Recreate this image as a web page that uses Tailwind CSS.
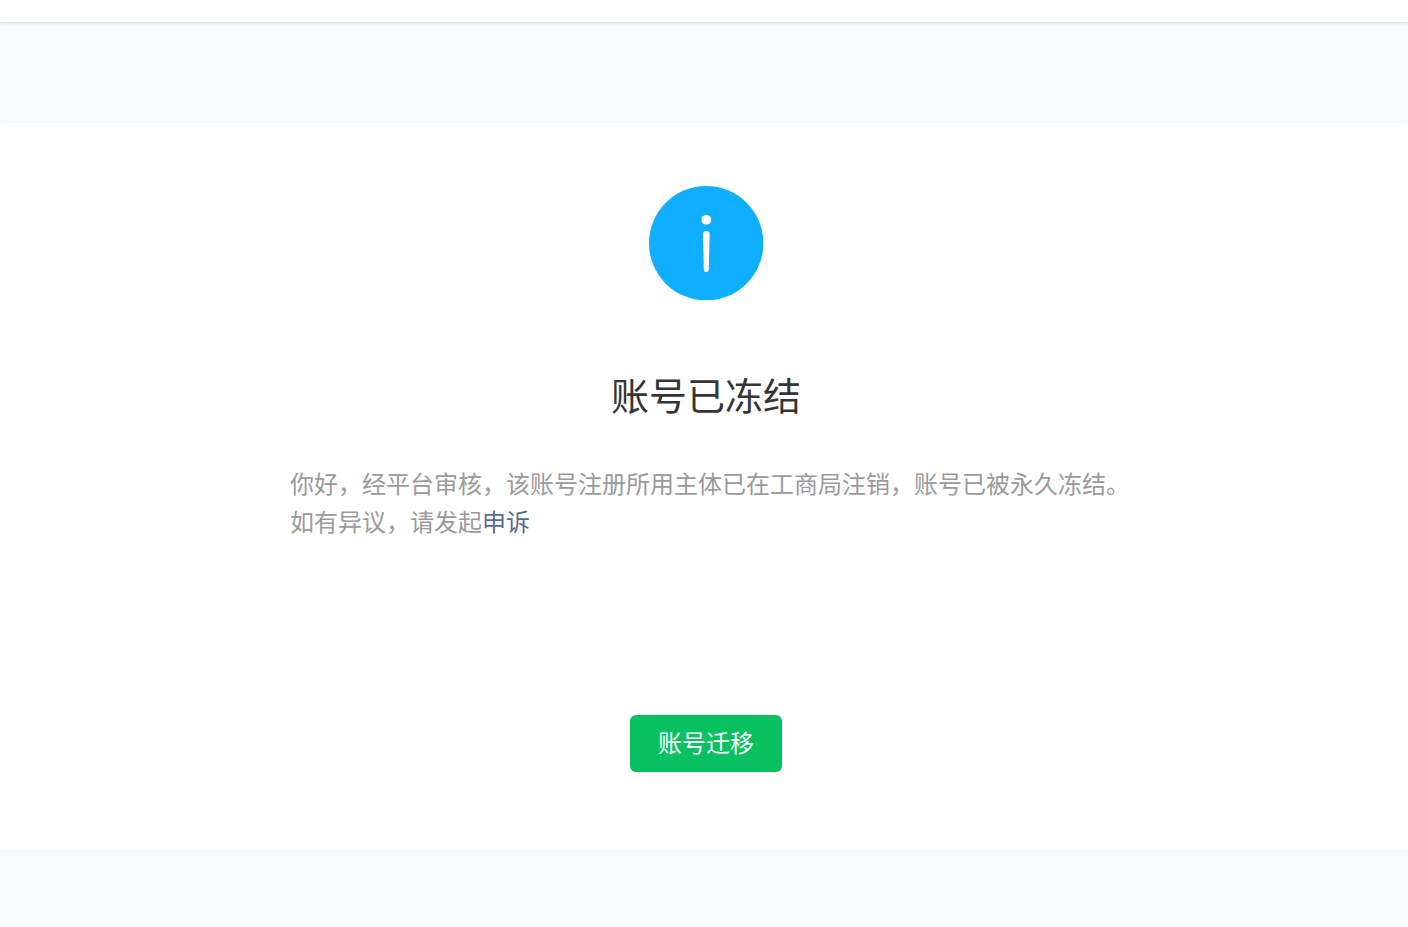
<!DOCTYPE html>
<html lang="zh-CN">
<head>
    <meta charset="UTF-8">
    <meta name="viewport" content="width=device-width, initial-scale=1.0">
    <title>账号已冻结</title>
    <script src="https://cdn.jsdelivr.net/npm/@tailwindcss/browser@4"></script>
</head>
<body class="bg-[#f8f9fb] min-h-screen font-['Noto_Sans_CJK_SC',sans-serif]">
    <header class="h-[22px] bg-white shadow-[0_1px_3px_rgba(0,0,0,0.15)]"></header>

    <main class="mt-[101px] flex flex-col items-center bg-white pt-[63px] pb-[78px] pl-1 shadow-[0_1px_8px_rgba(0,0,0,0.03)]">
        <svg class="size-[114px]" viewBox="0 0 114 114" aria-hidden="true">
            <circle cx="57.2" cy="57.2" r="57.2" fill="#10aeff"/>
            <circle cx="57.3" cy="33.8" r="4.9" fill="#fff"/>
            <path d="M54 48.4a3.3 3.3 0 0 1 6.6 0L59.8 83.6a2.5 2.5 0 0 1-5 0z" fill="#fff"/>
        </svg>

        <h1 class="mt-[66px] text-[38px] leading-[56px] text-[#353535]">账号已冻结</h1>

        <div class="mt-[42px] max-w-[848px] pl-2 text-2xl leading-[38px] text-[#9a9a9a]">
            <p>你好，经平台审核，该账号注册所用主体已在工商局注销，账号已被永久冻结。</p>
            <p>如有异议，请发起<a href="#" class="text-[#576b95]">申诉</a></p>
        </div>

        <button type="button" class="mt-[175px] h-[57px] rounded-md bg-[#07c160] px-7 pb-1 text-2xl text-white">账号迁移</button>
    </main>
</body>
</html>
